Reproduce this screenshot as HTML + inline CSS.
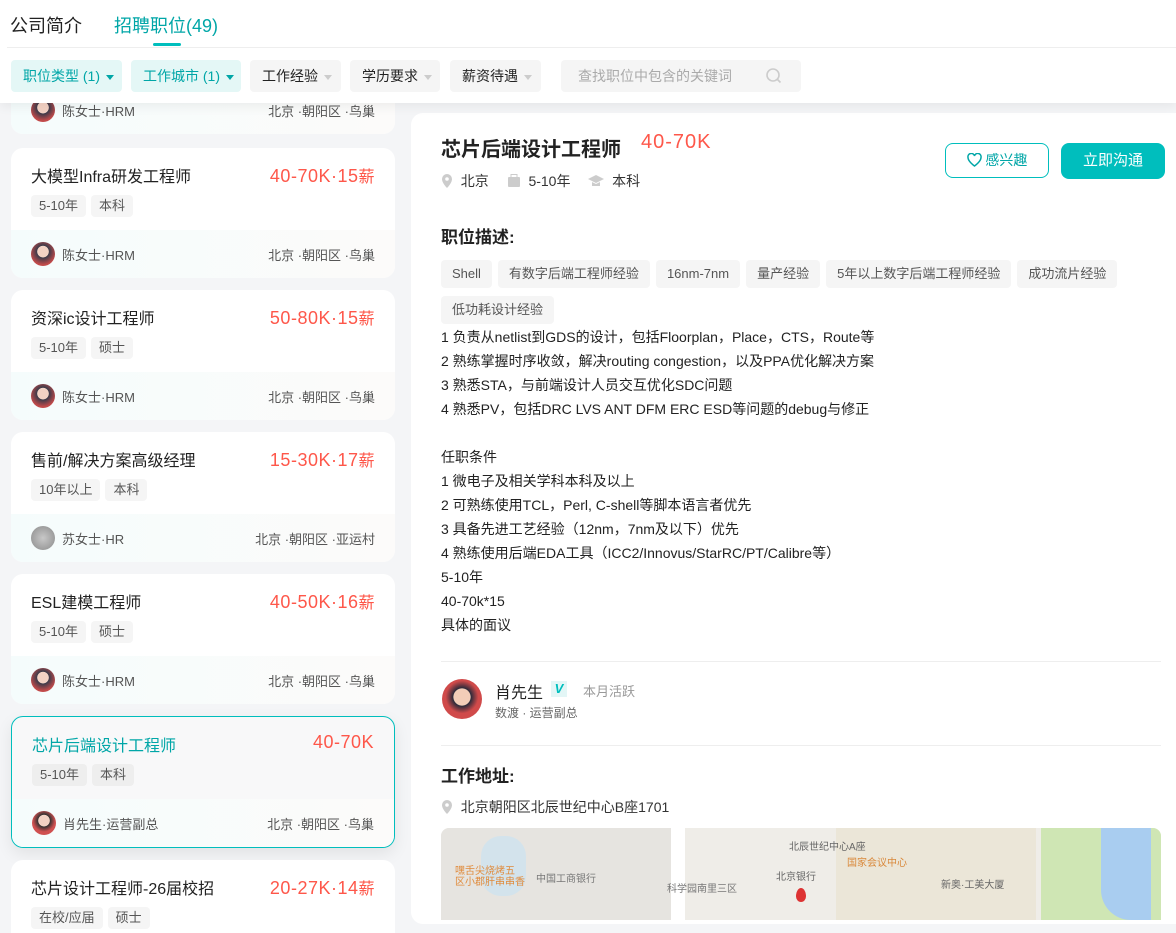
<!DOCTYPE html><html><head><meta charset="utf-8"><style>
*{margin:0;padding:0;box-sizing:border-box}
html,body{width:1176px;height:933px;overflow:hidden}
body{background:#f4f5f7;font-family:"Liberation Sans","Noto Sans CJK SC",sans-serif;color:#222;position:relative}
.abs{position:absolute}
.hdr{left:0;top:0;width:1176px;height:103px;background:#fff;box-shadow:0 4px 10px rgba(0,0,0,.06);z-index:5}
.tab{top:12px;font-size:18px}
.f{top:60px;height:32px;border-radius:4px;background:#f5f5f5;font-size:14px;line-height:32px;padding:0 12px;color:#222;white-space:nowrap}
.f.on{background:#e4f7f6;color:#00a6a7}
.tri{display:inline-block;width:0;height:0;border-left:4px solid transparent;border-right:4px solid transparent;border-top:5px solid #ccc;margin-left:6px;vertical-align:middle}
.on .tri{border-top-color:#00a6a7}
.card{left:11px;width:384px;height:130px;background:#fff;border-radius:12px;overflow:hidden}
.card .t{position:absolute;left:20px;top:15px;font-size:16px;color:#222}
.card .s{position:absolute;right:20px;top:15px;font-size:18px;color:#fe574a;letter-spacing:.5px}
.card .s small{font-size:16px}
.card .tg{position:absolute;left:20px;top:47px;white-space:nowrap}
.tg span,.tag{display:inline-block;background:#f5f5f5;color:#555;font-size:13px;height:22px;line-height:22px;padding:0 8px;border-radius:4px;margin-right:5px}
.card .ft{position:absolute;left:0;top:82px;width:100%;height:48px;background:linear-gradient(90deg,#f5fcfc,#fcfbfa)}
.av{position:absolute;left:20px;top:12px;width:24px;height:24px;border-radius:50%;background:radial-gradient(circle at 50% 40%,#f3d2c4 30%,#3b3b4a 32%,#c24a4a 70%)}
.ft .n{position:absolute;left:51px;top:15px;font-size:13px;color:#555}
.ft .l{position:absolute;right:20px;top:15px;font-size:13px;color:#555}
.sel{border:1px solid #00bebd;box-shadow:0 6px 16px rgba(0,0,0,.08);background:#f8f8f9}
.sel .t{color:#00a6a7}
.panel{left:411px;top:113px;width:765px;height:811px;background:#fff;border-radius:12px 0 0 12px}
.desc{left:441px;top:325px;font-size:14px;line-height:24px;color:#222}
.dt{height:28px;line-height:28px;padding:0 11px;margin:0 6px 8px 0}
</style></head><body>
<div class="abs hdr">
 <div class="abs tab" style="left:10px;color:#222">公司简介</div>
 <div class="abs tab" style="left:114px;color:#00a6a7">招聘职位(49)</div>
 <div class="abs" style="left:153px;top:43px;width:28px;height:3px;background:#00bebd;border-radius:2px"></div>
 <div class="abs" style="left:7px;top:47px;width:1169px;height:1px;background:#eee"></div>
 <div class="abs f on" style="left:11px;width:111px">职位类型 (1)<i class="tri"></i></div>
 <div class="abs f on" style="left:131px;width:110px">工作城市 (1)<i class="tri"></i></div>
 <div class="abs f" style="left:250px;width:91px">工作经验<i class="tri"></i></div>
 <div class="abs f" style="left:350px;width:90px">学历要求<i class="tri"></i></div>
 <div class="abs f" style="left:450px;width:91px">薪资待遇<i class="tri"></i></div>
 <div class="abs f" style="left:561px;width:240px;color:#aaa;padding-left:17px">查找职位中包含的关键词
  <svg class="abs" style="left:204px;top:7px" width="18" height="18" viewBox="0 0 18 18"><circle cx="8" cy="8" r="6" fill="none" stroke="#ccc" stroke-width="1.6"/><path d="M12.5 12.5l3 3" stroke="#ccc" stroke-width="1.6"/></svg></div>
</div>

<div class="abs card" style="top:4px"><div class="ft" style="top:82px"><div class="av"></div><div class="n">陈女士·HRM</div><div class="l">北京 ·朝阳区 ·鸟巢</div></div></div>

<div class="abs card" style="top:148px"><div class="t">大模型Infra研发工程师</div><div class="s">40-70K·15<small>薪</small></div><div class="tg"><span>5-10年</span><span>本科</span></div><div class="ft"><div class="av"></div><div class="n">陈女士·HRM</div><div class="l">北京 ·朝阳区 ·鸟巢</div></div></div>
<div class="abs card" style="top:290px"><div class="t">资深ic设计工程师</div><div class="s">50-80K·15<small>薪</small></div><div class="tg"><span>5-10年</span><span>硕士</span></div><div class="ft"><div class="av"></div><div class="n">陈女士·HRM</div><div class="l">北京 ·朝阳区 ·鸟巢</div></div></div>
<div class="abs card" style="top:432px"><div class="t">售前/解决方案高级经理</div><div class="s">15-30K·17<small>薪</small></div><div class="tg"><span>10年以上</span><span>本科</span></div><div class="ft"><div class="av" style="background:radial-gradient(circle,#c8c8c8,#8a8a8a)"></div><div class="n">苏女士·HR</div><div class="l">北京 ·朝阳区 ·亚运村</div></div></div>
<div class="abs card" style="top:574px"><div class="t">ESL建模工程师</div><div class="s">40-50K·16<small>薪</small></div><div class="tg"><span>5-10年</span><span>硕士</span></div><div class="ft"><div class="av"></div><div class="n">陈女士·HRM</div><div class="l">北京 ·朝阳区 ·鸟巢</div></div></div>
<div class="abs card sel" style="top:716px;height:132px"><div class="t">芯片后端设计工程师</div><div class="s">40-70K</div><div class="tg"><span style="background:#eee">5-10年</span><span style="background:#eee">本科</span></div><div class="ft" style="height:50px"><div class="av" style="background:radial-gradient(circle at 50% 40%,#f3d2c4 30%,#333 32%,#d05050 60%)"></div><div class="n">肖先生·运营副总</div><div class="l">北京 ·朝阳区 ·鸟巢</div></div></div>
<div class="abs card" style="top:860px;height:73px;border-radius:12px 12px 0 0"><div class="t">芯片设计工程师-26届校招</div><div class="s">20-27K·14<small>薪</small></div><div class="tg"><span>在校/应届</span><span>硕士</span></div></div>

<div class="abs panel"></div>
<div class="abs" style="left:441px;top:133px;font-size:20px;font-weight:bold;color:#222">芯片后端设计工程师</div>
<div class="abs" style="left:641px;top:131px;font-size:20px;color:#fe574a;letter-spacing:1px">40-70K</div>
<div class="abs" style="left:441px;top:172px;font-size:14px;color:#333;line-height:18px">
 <svg width="12" height="14" viewBox="0 0 12 14" style="vertical-align:-2px"><path d="M6 0a5 5 0 0 0-5 5c0 4 5 9 5 9s5-5 5-9a5 5 0 0 0-5-5z" fill="#ccc"/><circle cx="6" cy="5" r="1.8" fill="#fff"/></svg>&nbsp; 北京
 <span style="display:inline-block;width:14px"></span><svg width="14" height="14" viewBox="0 0 14 14" style="vertical-align:-2px"><rect x="1" y="3" width="12" height="10" rx="1" fill="#ccc"/><rect x="4" y="0.5" width="6" height="3" fill="none" stroke="#ccc"/></svg>&nbsp; 5-10年
 <span style="display:inline-block;width:14px"></span><svg width="16" height="14" viewBox="0 0 16 14" style="vertical-align:-2px"><path d="M8 1l8 4-8 4-8-4z M4 8v4h8V8L8 10z" fill="#ccc"/></svg>&nbsp; 本科</div>
<div class="abs" style="left:945px;top:143px;width:104px;height:35px;border:1px solid #00bebd;border-radius:8px;color:#00a6a7;font-size:14px;line-height:33px;text-align:center"><svg width="15" height="14" viewBox="0 0 15 14" style="vertical-align:-2px"><path d="M7.5 13S1 8.5 1 4.5A3.3 3.3 0 0 1 7.5 3 3.3 3.3 0 0 1 14 4.5C14 8.5 7.5 13 7.5 13z" fill="none" stroke="#00a6a7" stroke-width="1.5"/></svg> 感兴趣</div>
<div class="abs" style="left:1061px;top:143px;width:104px;height:36px;background:#00bebd;border-radius:8px;color:#fff;font-size:15px;line-height:36px;text-align:center">立即沟通</div>
<div class="abs" style="left:441px;top:223px;font-size:17px;font-weight:bold">职位描述:</div>
<div class="abs" style="left:441px;top:260px;width:725px;line-height:0">
 <span class="tag dt">Shell</span><span class="tag dt">有数字后端工程师经验</span><span class="tag dt">16nm-7nm</span><span class="tag dt">量产经验</span><span class="tag dt">5年以上数字后端工程师经验</span><span class="tag dt">成功流片经验</span><br><span class="tag dt">低功耗设计经验</span></div>
<div class="abs desc">1 负责从netlist到GDS的设计，包括Floorplan，Place，CTS，Route等<br>2 熟练掌握时序收敛，解决routing congestion，以及PPA优化解决方案<br>3 熟悉STA，与前端设计人员交互优化SDC问题<br>4 熟悉PV，包括DRC LVS ANT DFM ERC ESD等问题的debug与修正<br><br>任职条件<br>1 微电子及相关学科本科及以上<br>2 可熟练使用TCL，Perl, C-shell等脚本语言者优先<br>3 具备先进工艺经验（12nm，7nm及以下）优先<br>4 熟练使用后端EDA工具（ICC2/Innovus/StarRC/PT/Calibre等）<br>5-10年<br>40-70k*15<br>具体的面议</div>
<div class="abs" style="left:441px;top:661px;width:720px;height:1px;background:#eee"></div>
<div class="abs" style="left:442px;top:679px;width:40px;height:40px;border-radius:50%;background:radial-gradient(circle at 50% 45%,#f2cdb8 28%,#2a2a3a 30%,#d04a4a 55%)"></div>
<div class="abs" style="left:495px;top:679px;font-size:16px;color:#222">肖先生</div>
<div class="abs" style="left:551px;top:681px;width:16px;height:16px;background:#e3f6f6;color:#00bebd;font-size:13px;font-weight:bold;text-align:center;line-height:16px;font-style:italic">V</div>
<div class="abs" style="left:583px;top:681px;font-size:13px;color:#999">本月活跃</div>
<div class="abs" style="left:495px;top:704px;font-size:12px;color:#666">数渡 · 运营副总</div>
<div class="abs" style="left:441px;top:745px;width:720px;height:1px;background:#eee"></div>
<div class="abs" style="left:441px;top:762px;font-size:17px;font-weight:bold">工作地址:</div>
<div class="abs" style="left:441px;top:797px;font-size:14px;color:#333"><svg width="12" height="14" viewBox="0 0 12 14" style="vertical-align:-2px"><path d="M6 0a5 5 0 0 0-5 5c0 4 5 9 5 9s5-5 5-9a5 5 0 0 0-5-5z" fill="#ccc"/><circle cx="6" cy="5" r="1.8" fill="#fff"/></svg>&nbsp; 北京朝阳区北辰世纪中心B座1701</div>
<div class="abs" style="left:441px;top:828px;width:720px;height:92px;border-radius:8px 8px 0 0;overflow:hidden;background:#efede8">
 <div class="abs" style="left:0;top:0;width:230px;height:92px;background:#e6e4e0"></div>
 <div class="abs" style="left:40px;top:8px;width:45px;height:60px;background:#d3e3ec;border-radius:20px"></div>
 <div class="abs" style="left:230px;top:0;width:14px;height:92px;background:#fff"></div>
 <div class="abs" style="left:395px;top:0;width:200px;height:92px;background:#ebe6d8"></div>
 <div class="abs" style="left:600px;top:0;width:120px;height:92px;background:#cfe6b4"></div>
 <div class="abs" style="left:660px;top:0;width:50px;height:92px;background:#a9cdf0;border-radius:0 0 0 30px"></div>
 <div class="abs" style="left:14px;top:38px;font-size:10px;color:#e08a3a;line-height:11px">嘿舌尖烧烤五<br>区小郡肝串串香</div>
 <div class="abs" style="left:95px;top:42px;font-size:10px;color:#777">中国工商银行</div>
 <div class="abs" style="left:226px;top:52px;font-size:10px;color:#777">科学园南里三区</div>
 <div class="abs" style="left:348px;top:10px;font-size:10px;color:#666">北辰世纪中心A座</div>
 <div class="abs" style="left:335px;top:40px;font-size:10px;color:#666">北京银行</div>
 <div class="abs" style="left:406px;top:26px;font-size:10px;color:#d9883a">国家会议中心</div>
 <div class="abs" style="left:500px;top:48px;font-size:10px;color:#666">新奥·工美大厦</div>
 <div class="abs" style="left:355px;top:60px;width:10px;height:14px;background:#d33;border-radius:50% 50% 50% 50%/60% 60% 40% 40%"></div>
</div>
</body></html>
